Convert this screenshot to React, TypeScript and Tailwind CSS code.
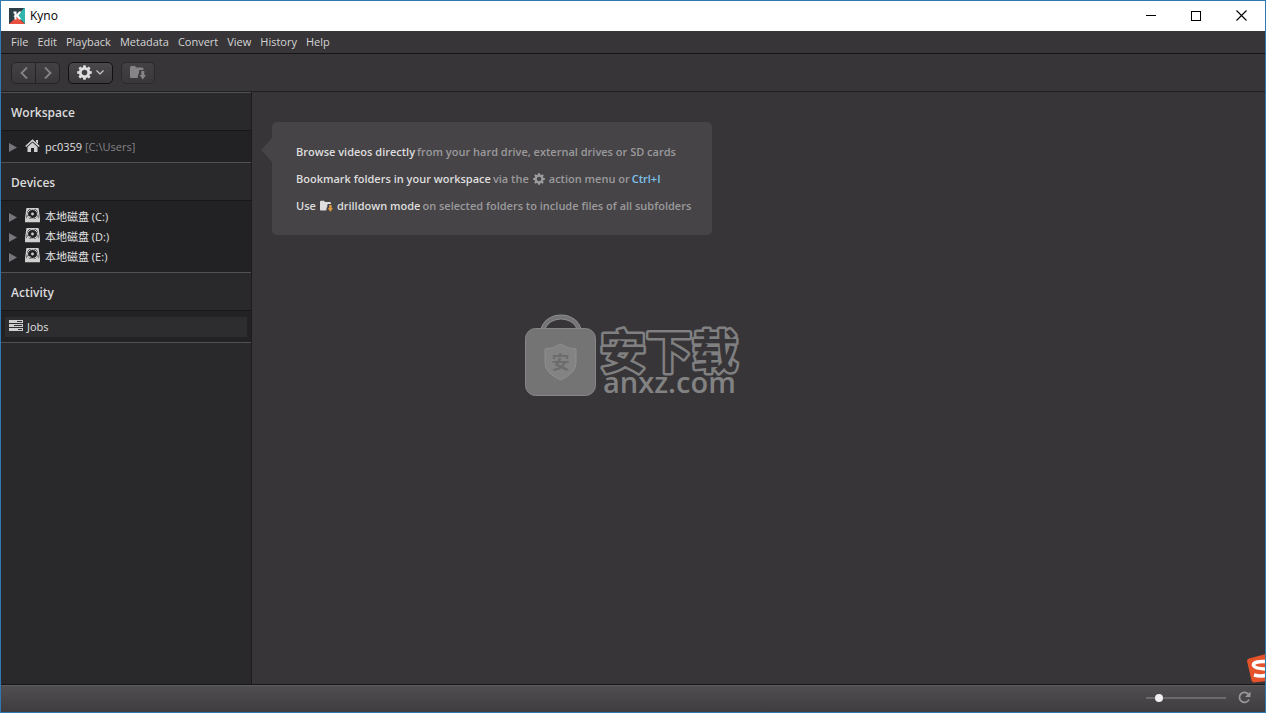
import type { ReactNode } from "react";

const menus = ["File", "Edit", "Playback", "Metadata", "Convert", "View", "History", "Help"];

const drives = ["C:", "D:", "E:"];

const teeth = [0, 45, 90, 135];

/* ================= ICONS ================= */

function KynoLogo() {
  return (
    <svg width="16" height="16" viewBox="0 0 16 16" aria-hidden="true">
      <path d="M0 0h16v16H0z" fill="#2d3d46" />
      <path d="M15 0h1v16L8.500 8z" fill="#2fb5ad" />
      <path d="M0 16l8-7 8 7z" fill="#e9503f" />
      <path d="M4.500 3.500h3v3L10 3.500h2.500L9.500 7.500l3 4H10L7.500 8.500v3h-2V9l-1-.8 1-.9V5.500h-1z" fill="#fff" />
    </svg>
  );
}

function Gear({ size, className }: { size: number; className: string }) {
  return (
    <svg width={size} height={size} viewBox="0 0 16 16" className={`shrink-0 ${className}`} aria-hidden="true">
      <circle cx="8" cy="8" r="4.500" fill="none" stroke="currentColor" strokeWidth="3" />
      {teeth.map((angle) => (
        <path
          key={angle}
          d="M6.300 3.200L6.700 0.200h2.600l.4 3zM6.300 12.800l.4 3h2.600l.4-3z"
          fill="currentColor"
          transform={`rotate(${angle} 8 8)`}
        />
      ))}
    </svg>
  );
}

function FolderDown({ size, arrow, className }: { size: number; arrow: string; className: string }) {
  return (
    <svg width={size} height={size} viewBox="0 0 16 16" className={`shrink-0 ${className}`} aria-hidden="true">
      <path d="M0 2.500q0-1.500 1.500-1.500H5L6 2.500h6q1.500 0 1.500 1.500v1H10q-1 0-1 1v2.500q-1.500 1-1 3L7.500 13H1q-1 0-1-1z" fill="currentColor" />
      <path d="M11.300 6h3v4H16L12.800 14.500 9.500 10h1.800z" fill={arrow} />
    </svg>
  );
}

function House() {
  return (
    <svg width="15" height="14" viewBox="0 0 15 14" className="text-[#d0d0d0]" aria-hidden="true">
      <path d="M0.700 7.500L7.500 1.300l6.800 6.200" fill="none" stroke="currentColor" strokeWidth="1.600" />
      <path d="M11 1h2v4l-2-2z" fill="currentColor" />
      <path d="M2.500 8l5-4.500 5 4.500v5H9V9H6v4H2.500z" fill="currentColor" />
    </svg>
  );
}

function Disk() {
  return (
    <svg width="15" height="15" viewBox="0 0 15 15" className="text-[#cfcfcf]" aria-hidden="true">
      <path d="M2 0.700h11l1.300 9v4H0.700v-4z" fill="none" stroke="currentColor" strokeWidth="1.300" />
      <path d="M0.500 11h14v3H0.500z" fill="currentColor" />
      <path d="M1.500 1h3L2 4zM13.500 1h-3L13 4zM1 11l1.500-3L5 11zM14 11l-1.500-3L10 11z" fill="currentColor" />
      <ellipse cx="7.500" cy="6" rx="5" ry="4.500" fill="#222124" stroke="currentColor" />
      <circle cx="7.500" cy="6" r="1.400" fill="currentColor" />
      <path d="M3.500 9.500l2-1" stroke="currentColor" strokeWidth="1.200" />
    </svg>
  );
}

function JobsIcon() {
  return (
    <svg width="14" height="12" viewBox="0 0 14 12" className="mb-[2px]" aria-hidden="true">
      <path d="M0 0h14v3H0zM0 4h14v3H0zM0 8h14v3H0z" fill="#cfcfcf" />
      <path d="M8 1.500h5M5 5.500h8M9 9.500h4" stroke="#2d2c2f" />
    </svg>
  );
}

function Watermark() {
  return (
    <svg width="216" height="84" viewBox="0 0 216 84" className="overflow-visible" role="img" aria-label="安下载 anxz.com">
      <path d="M18 14C23-2 49-2 54 14" fill="none" stroke="#8b8b8c" strokeWidth="5" />
      <path d="M18 14C23-2 49-2 54 14" fill="none" stroke="#747475" strokeWidth="3" />
      <rect x="0.500" y="13.500" width="70" height="67" rx="10" fill="#747475" stroke="#868687" />
      <path d="M35.500 29q8 5 15.500 5v14q0 10-15.500 17Q20 58 20 48V34q7.500 0 15.500-5z" fill="#838384" stroke="#8f8f90" />
      <text x="35.500" y="54" textAnchor="middle" className="fill-[#6c6c6d] font-['Noto_Sans_CJK_SC',sans-serif] text-[18px] font-bold">
        安
      </text>
      <text
        x="75"
        y="53"
        strokeWidth="5"
        strokeLinejoin="round"
        className="fill-[#373538] stroke-[#808081] font-['Noto_Sans_CJK_SC',sans-serif] text-[46px] font-bold [paint-order:stroke]"
      >
        安下载
      </text>
      <text x="78" y="78" className="fill-[#828283] font-['Open_Sans',sans-serif] text-[29px] font-semibold">
        anxz.com
      </text>
    </svg>
  );
}

function SogouBadge() {
  return (
    <svg width="19" height="29" viewBox="0 0 19 29" aria-hidden="true">
      <path d="M0 7q0-2 2-2.500L19 0v27L7 28.500q-2 0-2.500-2z" fill="#e5532a" />
      <path d="M19 7.500Q6 7 6.500 11.500q1 3 12.500 3.500M19 21q-5 2-12 0" fill="none" stroke="#fff" strokeWidth="3.500" />
    </svg>
  );
}

/* ================= SIDEBAR ================= */

function Section({ title, children }: { title: string; children: ReactNode }) {
  return (
    <section>
      <h2 className="flex h-[39px] items-center border-t border-b border-t-[#515053] border-b-[#171618] bg-[#29282b] px-[10px] pt-[2px] text-[12px] font-semibold text-[#dcdcdc]">
        {title}
      </h2>
      <div className="bg-[#222124] pt-[6px] pb-[5px]">{children}</div>
    </section>
  );
}

function TreeRow({ icon, children }: { icon: ReactNode; children: ReactNode }) {
  return (
    <button className="flex h-5 w-full items-center pl-2 text-left text-[#e0e0e0]">
      <svg width="8" height="9" viewBox="0 0 8 9" aria-hidden="true">
        <path d="M0 0l8 4.500L0 9z" fill="#77767a" />
      </svg>
      <span className="mr-[5px] mb-[3px] ml-2">{icon}</span>
      <span>{children}</span>
    </button>
  );
}

export default function App() {
  return (
    <div className="relative flex h-screen flex-col overflow-hidden border border-[#3079ae] bg-[#373538] font-['Open_Sans','Noto_Sans_CJK_SC',sans-serif] text-[11px] text-[#d4d4d4]">

      {/* ================= TITLE BAR ================= */}
      <header className="flex h-[30px] shrink-0 items-center bg-white pb-px pl-2 text-black">
        <KynoLogo />
        <h1 className="ml-[5px] flex-1 text-[12px]">Kyno</h1>
        <button aria-label="Minimize" className="flex h-full w-[46px] items-center justify-center">
          <span className="h-px w-[10px] bg-black" />
        </button>
        <button aria-label="Maximize" className="flex h-full w-11 items-center justify-center">
          <span className="size-[10px] border border-black" />
        </button>
        <button aria-label="Close" className="flex h-full w-[47px] items-center justify-center">
          <svg width="11" height="11" viewBox="0 0 11 11" aria-hidden="true">
            <path d="M0.500 0.500l10 10M10.500 0.500l-10 10" stroke="#000" strokeWidth="1.100" />
          </svg>
        </button>
      </header>

      {/* ================= MENU ================= */}
      <nav className="flex h-[23px] shrink-0 items-center gap-[9px] border-b border-[#151416] px-[10px]">
        {menus.map((menu) => (
          <button key={menu}>{menu}</button>
        ))}
      </nav>

      {/* ================= TOOLBAR ================= */}
      <div className="flex h-[38px] shrink-0 items-center gap-2 border-b border-[#201f21] px-[10px]">
        <div className="flex h-[22px] w-[49px] rounded-[5px] border border-[#252427] bg-linear-to-b from-[#434144] to-[#39373a]">
          <button aria-label="Back" className="flex flex-1 items-center justify-center border-r border-[#252427]">
            <svg width="8" height="12" viewBox="0 0 8 12" aria-hidden="true">
              <path d="M7 0.500L1.500 6 7 11.500" fill="none" stroke="#858487" strokeWidth="1.800" />
            </svg>
          </button>
          <button aria-label="Forward" className="flex flex-1 items-center justify-center">
            <svg width="8" height="12" viewBox="0 0 8 12" aria-hidden="true">
              <path d="M1 0.500L6.500 6 1 11.500" fill="none" stroke="#858487" strokeWidth="1.800" />
            </svg>
          </button>
        </div>
        <button
          aria-label="Actions"
          className="flex h-[22px] w-[45px] items-center justify-center gap-1 rounded-[5px] border border-[#111012] bg-linear-to-b from-[#4a484b] to-[#3b393c]"
        >
          <Gear size={15} className="text-[#dedede]" />
          <svg width="8" height="5" viewBox="0 0 8 5" aria-hidden="true">
            <path d="M0.500 0.500L4 4 7.500 0.500" fill="none" stroke="#c8c8c8" strokeWidth="1.200" />
          </svg>
        </button>
        <button
          aria-label="Drilldown"
          className="flex h-[22px] w-[34px] items-center justify-center rounded-[5px] border border-[#2a292b] bg-linear-to-b from-[#434144] to-[#39373a]"
        >
          <FolderDown size={16} arrow="#858487" className="text-[#858487]" />
        </button>
      </div>

      <div className="flex min-h-0 flex-1">

        {/* ================= SIDEBAR ================= */}
        <aside className="w-[251px] shrink-0 border-r border-[#1c1b1d] bg-[#29282b]">
          <Section title="Workspace">
            <TreeRow icon={<House />}>
              pc0359 <span className="text-[#858487]">[C:\Users]</span>
            </TreeRow>
          </Section>
          <Section title="Devices">
            {drives.map((drive) => (
              <TreeRow key={drive} icon={<Disk />}>
                本地磁盘 ({drive})
              </TreeRow>
            ))}
          </Section>
          <Section title="Activity">
            <div className="px-1">
              <button className="flex h-5 w-full items-center gap-1 bg-[#2d2c2f] pl-1 text-[#e0e0e0]">
                <JobsIcon />
                <span>Jobs</span>
              </button>
            </div>
          </Section>
          <div className="border-t border-[#515053]" />
        </aside>

        {/* ================= MAIN ================= */}
        <main className="flex-1 px-5 py-[30px]">
          <div className="relative w-[440px] rounded-[5px] bg-[#464447] px-6 pt-[17px] pb-[15px] font-semibold text-[#9b9a9c]">
            <svg width="11" height="24" viewBox="0 0 11 24" className="absolute top-4 -left-[11px]" aria-hidden="true">
              <path d="M11 0v24L0 12z" fill="#464447" />
            </svg>
            <p className="flex h-[27px] items-center gap-[2px] whitespace-nowrap">
              <b className="font-semibold text-[#dedede]">Browse videos directly</b>
              <span>from your hard drive, external drives or SD cards</span>
            </p>
            <p className="flex h-[27px] items-center gap-[2px] whitespace-nowrap">
              <b className="font-semibold text-[#dedede]">Bookmark folders in your workspace</b>
              <span>via the</span>
              <Gear size={12} className="mx-[2px] mb-[2px]" />
              <span>action menu or</span>
              <kbd className="font-[inherit] text-[11px] text-[#7cc4ec]">Ctrl+I</kbd>
            </p>
            <p className="flex h-[27px] items-center gap-[2px] whitespace-nowrap">
              <b className="font-semibold text-[#dedede]">Use</b>
              <FolderDown size={13} arrow="#e09a3e" className="mx-[2px] mb-px text-[#dedede]" />
              <b className="font-semibold text-[#dedede]">drilldown mode</b>
              <span>on selected folders to include files of all subfolders</span>
            </p>
          </div>
        </main>
      </div>

      {/* ================= STATUS BAR ================= */}
      <footer className="flex h-7 shrink-0 items-center justify-end gap-3 border-t border-[#171618] bg-linear-to-b from-[#514f52] to-[#3e3c3f] pr-[14px] pb-[2px] shadow-[inset_0_1px_0_#5d5b5e]">
        <input
          type="range"
          aria-label="Thumbnail size"
          min={0}
          max={100}
          defaultValue={13}
          className="h-4 w-20 appearance-none bg-transparent [&::-webkit-slider-runnable-track]:h-[2px] [&::-webkit-slider-runnable-track]:bg-[#6c6a6d] [&::-webkit-slider-thumb]:-mt-[3px] [&::-webkit-slider-thumb]:size-2 [&::-webkit-slider-thumb]:appearance-none [&::-webkit-slider-thumb]:rounded-full [&::-webkit-slider-thumb]:bg-[#f0f0f0]"
        />
        <button aria-label="Refresh">
          <svg width="13" height="13" viewBox="0 0 13 13" aria-hidden="true">
            <path d="M10.500 3.500A5 5 0 1 0 11 8.500" fill="none" stroke="#99989a" strokeWidth="1.800" />
            <path d="M12.500 0.500v5.500H7z" fill="#99989a" />
          </svg>
        </button>
      </footer>

      {/* Overlays */}
      <div className="pointer-events-none absolute inset-0 flex items-center justify-center">
        <Watermark />
      </div>
      <div className="absolute -right-px bottom-[29px]">
        <SogouBadge />
      </div>

    </div>
  );
}
